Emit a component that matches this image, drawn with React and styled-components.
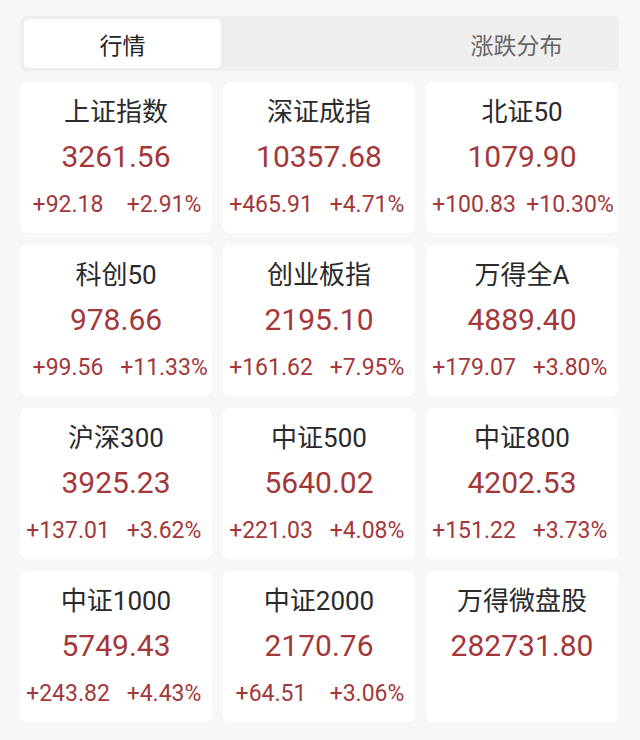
import React, { useState } from "react";
import styled, { createGlobalStyle } from "styled-components";

const GlobalStyle = createGlobalStyle`
  html, body {
    margin: 0;
    padding: 0;
    background: #f7f7f7;
  }
  body {
    font-family: Roboto, "Noto Sans CJK SC", sans-serif;
  }
`;

const Page = styled.div`
  width: 640px;
  min-height: 740px;
  box-sizing: border-box;
  padding: 16px 21px 0 20px;
  background: #f7f7f7;
`;

const TabBar = styled.div`
  display: grid;
  grid-template-columns: repeat(3, 1fr);
  height: 55px;
  box-sizing: border-box;
  padding: 3px 4px;
  background: #eeeeee;
  border-radius: 7px;
`;

const Tab = styled.div`
  display: flex;
  align-items: center;
  justify-content: center;
  border-radius: 5px;
  font-size: 23px;
  color: ${(p) => (p.$active ? "#222222" : "#666666")};
  background: ${(p) => (p.$active ? "#ffffff" : "transparent")};
  cursor: pointer;
`;

const Grid = styled.div`
  display: grid;
  grid-template-columns: repeat(3, 192px);
  column-gap: 11px;
  row-gap: 12px;
  margin-top: 11px;
`;

const Card = styled.div`
  height: 151px;
  box-sizing: border-box;
  padding-top: 14px;
  background: #ffffff;
  border-radius: 7px;
  text-align: center;
`;

const Name = styled.div`
  font-size: 26px;
  line-height: 32px;
  color: #2a2a2a;
`;

const Value = styled.div`
  margin-top: 10px;
  font-size: 30px;
  line-height: 38px;
  color: #a3383a;
`;

const Changes = styled.div`
  display: grid;
  grid-template-columns: 1fr 1fr;
  margin-top: 13px;
  font-size: 23px;
  line-height: 32px;
  color: #a3383a;
  white-space: nowrap;
`;

const indices = [
  { name: "上证指数", value: "3261.56", diff: "+92.18", pct: "+2.91%" },
  { name: "深证成指", value: "10357.68", diff: "+465.91", pct: "+4.71%" },
  { name: "北证50", value: "1079.90", diff: "+100.83", pct: "+10.30%" },
  { name: "科创50", value: "978.66", diff: "+99.56", pct: "+11.33%" },
  { name: "创业板指", value: "2195.10", diff: "+161.62", pct: "+7.95%" },
  { name: "万得全A", value: "4889.40", diff: "+179.07", pct: "+3.80%" },
  { name: "沪深300", value: "3925.23", diff: "+137.01", pct: "+3.62%" },
  { name: "中证500", value: "5640.02", diff: "+221.03", pct: "+4.08%" },
  { name: "中证800", value: "4202.53", diff: "+151.22", pct: "+3.73%" },
  { name: "中证1000", value: "5749.43", diff: "+243.82", pct: "+4.43%" },
  { name: "中证2000", value: "2170.76", diff: "+64.51", pct: "+3.06%" },
  { name: "万得微盘股", value: "282731.80" },
];

const tabs = ["行情", "", "涨跌分布"];

export default function App() {
  const [active, setActive] = useState(0);

  return (
    <>
      <GlobalStyle />
      <Page>
        <TabBar>
          {tabs.map((t, i) => (
            <Tab key={i} $active={active === i} onClick={() => t && setActive(i)}>
              {t}
            </Tab>
          ))}
        </TabBar>
        <Grid>
          {indices.map((it) => (
            <Card key={it.name}>
              <Name>{it.name}</Name>
              <Value>{it.value}</Value>
              {it.diff && (
                <Changes>
                  <span>{it.diff}</span>
                  <span>{it.pct}</span>
                </Changes>
              )}
            </Card>
          ))}
        </Grid>
      </Page>
    </>
  );
}
